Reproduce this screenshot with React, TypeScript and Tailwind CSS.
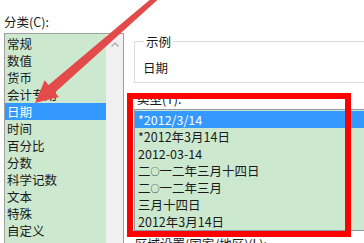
import React from "react";

const leftItems = ["常规", "数值", "货币", "会计专用", "日期", "时间", "百分比", "分数", "科学记数", "文本", "特殊", "自定义"];

function Circ() {
  return <span className="text-[9px] align-[1px]">○</span>;
}

const rightItems: React.ReactNode[] = [
  "*2012/3/14",
  "*2012年3月14日",
  "2012-03-14",
  <>二<Circ />一二年三月十四日</>,
  <>二<Circ />一二年三月</>,
  "三月十四日",
  "2012年3月14日",
];

export default function App() {
  return (
    <div
      className="relative w-[364px] h-[243px] overflow-hidden bg-white text-[#1a1a1a] text-[12.5px] leading-[17px]"
      style={{ fontFamily: '"Noto Sans CJK SC", "Noto Sans", sans-serif' }}
    >
      <div className="flex items-start">
        {/* Left column */}
        <div className="pt-[13px] pl-[4px] w-[124px] shrink-0">
          <div className="h-[17px] whitespace-nowrap">分类(C):</div>
          <div className="mt-[3px] flex h-[260px] w-[120px] border border-[#a0a0a0]">
            <div className="w-[101px] bg-[#cce8cf] pt-[1px]">
              {leftItems.map((t, i) => (
                <div
                  key={t}
                  className={
                    i === 4
                      ? "h-[17px] pl-[2px] bg-[#3399ff] text-white whitespace-nowrap"
                      : "h-[17px] pl-[2px] whitespace-nowrap"
                  }
                >
                  {t}
                </div>
              ))}
            </div>
            <div className="w-[17px] bg-[#f0f0f0] flex justify-center pt-[8px]">
              <svg width="8" height="5" viewBox="0 0 8 5">
                <path d="M0.5 4.5 L4 1 L7.5 4.5" fill="none" stroke="#a6a6a6" strokeWidth="1.2" />
              </svg>
            </div>
          </div>
        </div>

        {/* Right column */}
        <div className="ml-[10px] pt-[33px] shrink-0">
          <fieldset className="w-[260px] h-[50px] border border-[#dcdcdc] pl-[8px]">
            <legend className="ml-[1px] px-[2px] leading-[17px]">示例</legend>
            <div className="mt-[9px]">日期</div>
          </fieldset>
          <div className="mt-[7px] pl-[3px] h-[17px] whitespace-nowrap">类型(T):</div>
          <div className="mt-[2px] w-[260px] border border-[#8c9aa6] bg-[#cce8cf] pt-[1px]">
            {rightItems.map((t, i) => (
              <div
                key={i}
                className={
                  i === 0
                    ? "h-[17px] pl-[3px] bg-[#3399ff] text-white whitespace-nowrap"
                    : "h-[17px] pl-[3px] whitespace-nowrap"
                }
              >
                {t}
              </div>
            ))}
          </div>
          <div className="mt-[4px] pl-[1px] h-[17px] whitespace-nowrap">区域设置(国家/地区)(L):</div>
        </div>
      </div>

      {/* Red annotation rectangle */}
      <div className="absolute left-[127px] top-[93px] w-[224px] h-[144px] border-[6px] border-[#ff0000] pointer-events-none" />

      {/* Red arrow annotation */}
      <svg className="absolute left-0 top-0 pointer-events-none" width="364" height="243" viewBox="0 0 364 243">
        <polygon
          points="158.6,-1.1 55,92.5 58.9,97.1 35,103 44.7,80.3 48.6,84.9 155.4,-4.9"
          fill="#e34a4a"
        />
      </svg>
    </div>
  );
}
